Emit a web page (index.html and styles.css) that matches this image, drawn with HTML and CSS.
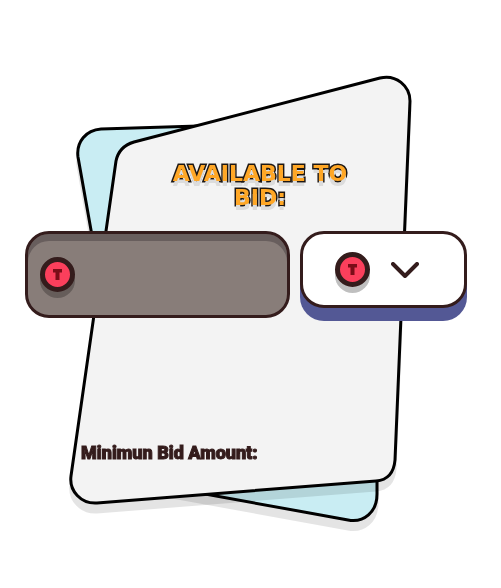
FILE: index.html
```html
<!DOCTYPE html>
<html lang="en">
<head>
<meta charset="utf-8">
<meta name="viewport" content="width=device-width, initial-scale=1">
<title>Available to bid</title>
<link rel="stylesheet" href="styles.css">
</head>
<body>
<main class="bid">
  <svg class="bid-art" viewBox="0 0 501 588" aria-hidden="true">
    <defs>
      <path id="back" d="M101 129 L300 123 Q377 123 377 200 L377 494 C377 512 364 523 348 520 L150 484 Q136 481 133 466 L78 157 C76 142 86 130 101 129 Z"/>
      <path id="front" d="M134 142 L380 78 C396 74 410 86 410 101 L395 460 C394 472 388 480 376 481 L97 503 C81 504 69 491 71 476 L116 161 C118 151 124 145 134 142 Z"/>
    </defs>
    <use href="#back" class="art-shadow" y="9"/>
    <use href="#back" class="art-back"/>
    <use href="#front" class="art-shadow" y="9"/>
    <use href="#front" class="art-front"/>
  </svg>
  <form class="bid-content">
    <h1 class="bid-title">Available to bid:</h1>
    <div class="bid-row">
      <div class="amount">
        <span class="coin"><svg viewBox="0 0 25 25" aria-hidden="true"><path d="M8 7H17V10.500H14.500V18H10.500V10.500H8Z"/></svg></span>
        <input class="amount-input" id="amount" type="text" inputmode="decimal">
      </div>
      <button class="token" type="button" aria-label="Choose token">
        <span class="coin"><svg viewBox="0 0 25 25" aria-hidden="true"><path d="M8 7H17V10.500H14.500V18H10.500V10.500H8Z"/></svg></span>
        <svg class="chevron" viewBox="0 0 28 16" aria-hidden="true"><path d="M2 2L14 14L26 2"/></svg>
      </button>
    </div>
    <label class="bid-minimum" for="amount">Minimun Bid Amount:</label>
  </form>
</main>
</body>
</html>
```
FILE: styles.css
```css
* {
  box-sizing: border-box;
}

body {
  margin: 0;
  background: #fff;
  color: #341c1c;
  font-family: Roboto, "Liberation Sans", sans-serif;
}

.bid {
  display: grid;
  grid-template-columns: minmax(0, 1fr);
}

.bid-art,
.bid-content {
  grid-area: 1 / 1;
}

.bid-art {
  display: block;
  width: 100%;
}

.art-shadow {
  fill: #000;
  stroke: #000;
  stroke-width: 3;
  opacity: 0.1;
}

.art-back,
.art-front {
  stroke: #000;
  stroke-width: 3;
}

.art-back {
  fill: #c9edf3;
}

.art-front {
  fill: #f3f3f3;
}

.bid-content {
  z-index: 1;
  display: flex;
  flex-direction: column;
  padding: 162px 34px 0 25px;
}

.bid-title {
  align-self: center;
  max-width: 200px;
  margin: 0 0 0 28px;
  color: #ffa726;
  font: bold 22px/24px "DejaVu Sans", sans-serif;
  text-align: center;
  text-transform: uppercase;
  -webkit-text-stroke: 3px #1d1714;
  paint-order: stroke fill;
  text-shadow: 0 5px 0 #dcdcdc;
  will-change: transform;
}

.bid-row {
  display: flex;
  align-items: flex-start;
  gap: 10px;
  margin-top: 21px;
}

.amount {
  display: flex;
  flex: 1;
  align-items: center;
  gap: 12px;
  min-width: 0;
  height: 87px;
  padding: 0 12px;
  border: 3px solid #341c1c;
  border-radius: 24px;
  background: #887d79;
  box-shadow: inset 0 7px 0 #685e5d;
}

.amount-input {
  flex: 1;
  min-width: 0;
  height: 48px;
  padding: 0;
  border: 0;
  outline: 0;
  background: transparent;
  color: #fff;
  font: 900 20px/24px Roboto, sans-serif;
}

.coin {
  flex: none;
  width: 35px;
  height: 35px;
  border: 5px solid #341c1c;
  border-radius: 50%;
  background: #fb3f5c;
  box-shadow: 0 6px 0 rgba(0, 0, 0, 0.25);
}

.coin svg {
  display: block;
  width: 25px;
  height: 25px;
  fill: #7b0d18;
}

.token {
  display: flex;
  flex: none;
  align-items: center;
  justify-content: center;
  gap: 21px;
  width: 167px;
  height: 77px;
  padding: 0 13px 0 0;
  border: 3px solid #341c1c;
  border-radius: 24px;
  background: #fff;
  box-shadow: 0 13px 0 #535895;
  cursor: pointer;
}

.chevron {
  width: 28px;
  height: 16px;
  fill: none;
  stroke: #341c1c;
  stroke-width: 4;
  stroke-linecap: round;
  stroke-linejoin: round;
}

.bid-minimum {
  align-self: flex-start;
  margin: 123px 0 0 56px;
  font-size: 18px;
  font-weight: 900;
  line-height: 24px;
  -webkit-text-stroke: 1px #341c1c;
  will-change: transform;
}
```
